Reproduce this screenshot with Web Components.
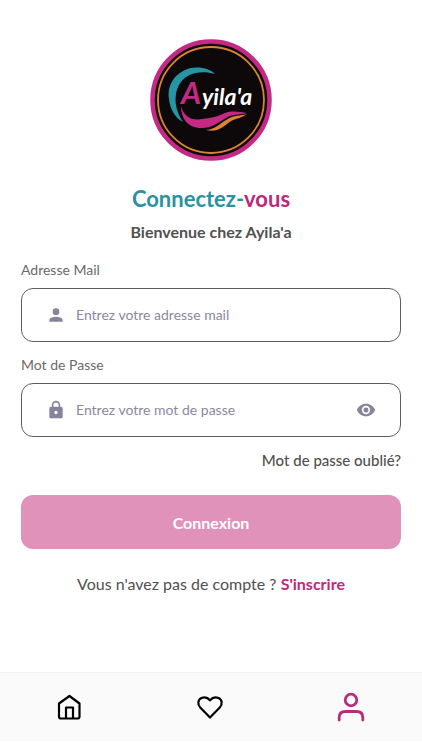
<!DOCTYPE html>
<html lang="fr">
<head>
<meta charset="UTF-8">
<meta name="viewport" content="width=device-width, initial-scale=1">
<title>Ayila'a - Connexion</title>
<style>
    body {
        margin: 0;
        background-color: #fff;
        color: #505050;
        font-family: Lato, "Open Sans", sans-serif;
    }
</style>
</head>
<body>
<login-page></login-page>

<script>
class AyilaaLogo extends HTMLElement {
    connectedCallback() {
        this.attachShadow({ mode: 'open' });
        this.shadowRoot.innerHTML = `
            <style>
                :host {
                    display: block;
                    width: 122px;
                }
                svg {
                    display: block;
                    width: 100%;
                }
                text {
                    font-family: Lato, sans-serif;
                    font-style: italic;
                    font-weight: 700;
                }
            </style>
            <svg viewBox="0 0 122 122" role="img" aria-label="Ayila'a">
                <circle cx="61" cy="61" r="58.5" fill="#0d0809" stroke="#c42a83" stroke-width="4.5"/>
                <circle cx="61" cy="61" r="53" fill="none" stroke="#dc8430" stroke-width="1.8"/>
                <path d="M65 35 C59 28 43 26 33 32 C22 38 17 49 19 60 C20 70 25 79 33 83 C25 71 23 57 29 46 C36 34 50 31 65 35Z" fill="#2595a5"/>
                <path d="M31 67 C34 78 42 82 52 80 C62 79 69 77 75 74 C82 71 91 73 97 74 C89 76 82 75 76 79 C68 84 60 90 49 89 C38 88 31 80 31 67Z" fill="#c42a83"/>
                <path d="M56 91 C66 90 70 84 78 80 C84 76 90 77 97 75 C92 79 87 79 81 82 C73 88 67 94 56 91Z" fill="#dc8430"/>
                <text x="31" y="65" font-size="31" fill="#c42a83">A</text>
                <text x="52" y="66" font-size="23" fill="#fff">yila'a</text>
            </svg>
        `;
    }
}

class FormField extends HTMLElement {
    connectedCallback() {
        const type = this.getAttribute('type') || 'text';
        this.attachShadow({ mode: 'open' });
        this.shadowRoot.innerHTML = `
            <style>
                :host {
                    display: block;
                }
                label {
                    display: block;
                    margin-bottom: 8px;
                    color: #6a6a6a;
                    font-size: 14px;
                    line-height: 20px;
                }
                .box {
                    display: flex;
                    align-items: center;
                    box-sizing: border-box;
                    height: 54px;
                    padding: 0 24px;
                    border: 1px solid #5e5e5e;
                    border-radius: 12px;
                    color: #86839a;
                }
                .box:focus-within {
                    border-color: #2595a5;
                }
                input {
                    flex: 1;
                    min-width: 0;
                    margin-left: 10px;
                    padding: 0;
                    border: 0;
                    outline: 0;
                    background: none;
                    color: #505050;
                    font: inherit;
                    font-size: 14px;
                    line-height: 20px;
                }
                input::placeholder {
                    color: #8b889e;
                    opacity: 1;
                }
                button {
                    padding: 0;
                    border: 0;
                    background: none;
                    color: inherit;
                    cursor: pointer;
                }
                svg, ::slotted(svg) {
                    display: block;
                    width: 20px;
                    height: 20px;
                    fill: currentColor;
                }
            </style>
            <label for="input">${this.getAttribute('label')}</label>
            <div class="box">
                <slot></slot>
                <input id="input" type="${type}" placeholder="${this.getAttribute('placeholder')}">
                ${type === 'password' ? `
                <button type="button" aria-label="Afficher le mot de passe">
                    <svg viewBox="0 0 24 24"><path d="M12 4.5C7 4.5 2.7 7.6 1 12c1.7 4.4 6 7.5 11 7.5s9.3-3.1 11-7.5c-1.7-4.4-6-7.5-11-7.5zM12 17a5 5 0 1 1 0-10 5 5 0 0 1 0 10zm0-8a3 3 0 1 0 0 6 3 3 0 0 0 0-6z"/></svg>
                </button>` : ''}
            </div>
        `;

        const input = this.shadowRoot.querySelector('input');
        const toggle = this.shadowRoot.querySelector('button');
        if (toggle) {
            toggle.addEventListener('click', () => {
                input.type = input.type === 'password' ? 'text' : 'password';
            });
        }
    }
}

class PrimaryButton extends HTMLElement {
    connectedCallback() {
        this.attachShadow({ mode: 'open' });
        this.shadowRoot.innerHTML = `
            <style>
                :host {
                    display: block;
                }
                button {
                    width: 100%;
                    height: 54px;
                    border: 0;
                    border-radius: 12px;
                    background-color: #e092ba;
                    color: white;
                    font: inherit;
                    font-size: 16px;
                    font-weight: 700;
                    cursor: pointer;
                }
            </style>
            <button type="button"><slot></slot></button>
        `;
    }
}

class BottomNav extends HTMLElement {
    connectedCallback() {
        this.attachShadow({ mode: 'open' });
        this.shadowRoot.innerHTML = `
            <style>
                :host {
                    display: block;
                    background-color: #fafafa;
                    border-top: 1px solid #f0f0f0;
                }
                nav {
                    display: grid;
                    grid-template-columns: repeat(3, 1fr);
                    height: 68px;
                }
                a {
                    display: flex;
                    align-items: center;
                    justify-content: center;
                    color: #000;
                }
                a.active {
                    color: #b92b78;
                }
                svg {
                    width: 32px;
                    height: 32px;
                    fill: none;
                    stroke: currentColor;
                    stroke-width: 2.2;
                    stroke-linecap: round;
                    stroke-linejoin: round;
                }
                .active svg {
                    stroke-width: 2.8;
                }
            </style>
            <nav>
                <a href="#accueil" aria-label="Accueil">
                    <svg viewBox="0 0 32 32"><path d="M15.5 5 L25.5 12.500 V25.500 Q25.500 27.500 23.500 27.500 H7 Q5 27.500 5 25.500 V12.500 Z M12 27 V16.500 H19 V27"/></svg>
                </a>
                <a href="#favoris" aria-label="Favoris">
                    <svg viewBox="0 0 32 32"><path d="M15 26.500 L5.200 16.500 C2.200 13.500 2.900 8.500 6.500 7 C9.500 5.800 12.500 6.300 15 9.300 C17.500 6.300 20.500 5.800 23.500 7 C27.100 8.500 27.800 13.500 24.800 16.500 Z"/></svg>
                </a>
                <a href="#profil" class="active" aria-label="Profil">
                    <svg viewBox="0 0 32 32"><circle cx="15" cy="9" r="5.800"/><path d="M3.200 29 V26.500 Q3.200 20.500 9.500 20.500 H20.500 Q26.800 20.500 26.800 26.500 V29"/></svg>
                </a>
            </nav>
        `;
    }
}

class LoginPage extends HTMLElement {
    connectedCallback() {
        this.attachShadow({ mode: 'open' });
        this.shadowRoot.innerHTML = `
            <style>
                :host {
                    display: flex;
                    flex-direction: column;
                    box-sizing: border-box;
                    min-height: 100vh;
                    padding-bottom: 9px;
                }
                main {
                    flex: 1;
                    padding: 39px 21px 24px;
                }
                ayilaa-logo {
                    margin: 0 auto;
                }
                h1 {
                    margin: 22px 0 5px;
                    color: #2b91a0;
                    font-size: 22px;
                    font-weight: 700;
                    line-height: 32px;
                    text-align: center;
                }
                h1 span, .signup a {
                    color: #bd2878;
                }
                h2 {
                    margin: 0 0 16px;
                    font-size: 16px;
                    font-weight: 700;
                    line-height: 24px;
                    text-align: center;
                }
                form {
                    display: flex;
                    flex-direction: column;
                    gap: 13px;
                }
                a {
                    color: inherit;
                    text-decoration: none;
                }
                .forgot {
                    align-self: flex-end;
                    font-size: 15px;
                    font-weight: 500;
                    line-height: 20px;
                }
                primary-button {
                    margin-top: 12px;
                }
                .signup {
                    margin: 23px 0 0;
                    font-size: 16px;
                    line-height: 24px;
                    text-align: center;
                }
                .signup a {
                    font-weight: 700;
                }
            </style>
            <main>
                <ayilaa-logo></ayilaa-logo>
                <h1>Connectez-<span>vous</span></h1>
                <h2>Bienvenue chez Ayila'a</h2>
                <form>
                    <form-field type="email" label="Adresse Mail" placeholder="Entrez votre adresse mail">
                        <svg viewBox="0 0 24 24"><path d="M12 12a4 4 0 1 0 0-8 4 4 0 0 0 0 8zm0 2c-2.7 0-8 1.3-8 4v2h16v-2c0-2.7-5.3-4-8-4z"/></svg>
                    </form-field>
                    <form-field type="password" label="Mot de Passe" placeholder="Entrez votre mot de passe">
                        <svg viewBox="0 0 24 24"><path d="M18 8h-1V6A5 5 0 0 0 7 6v2H6a2 2 0 0 0-2 2v10a2 2 0 0 0 2 2h12a2 2 0 0 0 2-2V10a2 2 0 0 0-2-2zm-6 9a2 2 0 1 1 0-4 2 2 0 0 1 0 4zm3.1-9H8.9V6a3.1 3.1 0 0 1 6.2 0z"/></svg>
                    </form-field>
                    <a href="#oublie" class="forgot">Mot de passe oublié?</a>
                    <primary-button>Connexion</primary-button>
                </form>
                <p class="signup">Vous n'avez pas de compte ? <a href="#inscription">S'inscrire</a></p>
            </main>
            <bottom-nav></bottom-nav>
        `;
    }
}

customElements.define('ayilaa-logo', AyilaaLogo);
customElements.define('form-field', FormField);
customElements.define('primary-button', PrimaryButton);
customElements.define('bottom-nav', BottomNav);
customElements.define('login-page', LoginPage);
</script>
</body>
</html>
